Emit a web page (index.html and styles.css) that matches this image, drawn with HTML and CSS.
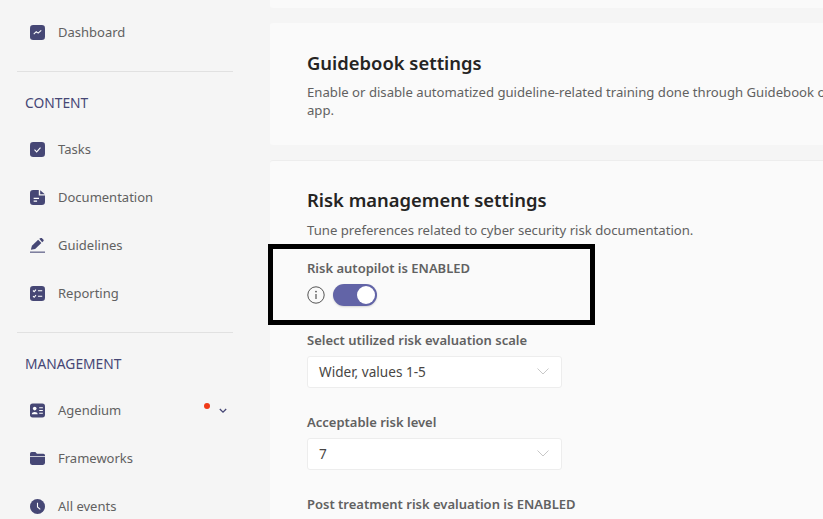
FILE: index.html
```html
<!DOCTYPE html>
<html lang="en">
<head>
    <meta charset="UTF-8">
    <meta name="viewport" content="width=device-width, initial-scale=1.0">
    <title>Risk management settings</title>
    <link rel="stylesheet" href="styles.css">
</head>
<body>
    <nav class="sidebar">
        <a class="nav-item">
            <svg class="nav-icon" viewBox="0 0 14 14"><rect width="14" height="14" rx="3" fill="#464775"/><path d="M3.5 8.5 L5.8 6.2 L7.6 7.6 L10.5 5" fill="none" stroke="#fff" stroke-width="1"/></svg>
            Dashboard
        </a>
        <div class="divider"></div>
        <div class="section-label">CONTENT</div>
        <a class="nav-item">
            <svg class="nav-icon" viewBox="0 0 14 14"><rect width="14" height="14" rx="3" fill="#464775"/><path d="M4.2 7.2 L6.2 9.2 L9.8 5.2" fill="none" stroke="#fff" stroke-width="1"/></svg>
            Tasks
        </a>
        <a class="nav-item">
            <svg class="nav-icon" viewBox="0 0 14 14"><path d="M3 0 H8.2 V5.2 H14 V11 A3 3 0 0 1 11 14 H3 A3 3 0 0 1 0 11 V3 A3 3 0 0 1 3 0 Z" fill="#464775"/><path d="M9.5 0.2 L13.8 3.9 H9.5 Z" fill="#464775"/><path d="M3.4 7.8 H8.4 M3.4 10.4 H6.6" stroke="#fff" stroke-width="1"/></svg>
            Documentation
        </a>
        <a class="nav-item">
            <svg class="nav-icon" viewBox="0 0 14 14"><path d="M0.8 11 L1.8 7.2 L7.6 1.6 L10.6 4.6 L4.8 10.2 Z" fill="#464775"/><path d="M8.6 0.8 L10 0 A1 1 0 0 1 11 0 L12.6 1.6 A1 1 0 0 1 12.6 2.8 L11.4 3.9 Z" fill="#464775"/><path d="M0 13.2 H14" stroke="#464775" stroke-width="1"/></svg>
            Guidelines
        </a>
        <a class="nav-item">
            <svg class="nav-icon" viewBox="0 0 14 14"><rect width="14" height="14" rx="3" fill="#464775"/><path d="M7.4 4.4 H11.4 M7.4 9.6 H11.4 M2.8 4.2 L3.9 5.3 L5.6 3.4 M2.8 9.4 L3.9 10.5 L5.6 8.6" fill="none" stroke="#fff" stroke-width="1"/></svg>
            Reporting
        </a>
        <div class="divider"></div>
        <div class="section-label">MANAGEMENT</div>
        <a class="nav-item">
            <svg class="nav-icon" viewBox="0 0 14 14"><rect y="0.5" width="14" height="13" rx="2.5" fill="#464775"/><circle cx="4.4" cy="5.2" r="1.7" fill="#fff"/><path d="M1.6 10.4 C1.8 7.6 7 7.6 7.2 10.4 Z" fill="#fff"/><path d="M8.6 4.4 H12 M8.6 7 H12 M8.6 9.6 H12" stroke="#fff" stroke-width="1"/></svg>
            Agendium
            <span class="red-dot"></span>
            <svg class="nav-chevron" viewBox="0 0 8 6"><path d="M0.8 1 L4 4.2 L7.2 1" fill="none" stroke="#464775" stroke-width="1.3"/></svg>
        </a>
        <a class="nav-item">
            <svg class="nav-icon" viewBox="0 0 14 14"><path d="M0 2.5 A1.5 1.5 0 0 1 1.5 1 H5 L6.5 2.5 H12.5 A1.5 1.5 0 0 1 14 4 V4.6 H0 Z" fill="#464775"/><path d="M0 5.4 H14 V11 A2 2 0 0 1 12 13 H2 A2 2 0 0 1 0 11 Z" fill="#464775"/></svg>
            Frameworks
        </a>
        <a class="nav-item">
            <svg class="nav-icon" viewBox="0 0 14 14"><circle cx="7" cy="7" r="7" fill="#464775"/><path d="M7 3.4 V7.4 L9.6 9.6" fill="none" stroke="#fff" stroke-width="1"/></svg>
            All events
        </a>
    </nav>

    <main class="content">
        <div class="card card-stub"></div>

        <section class="card">
            <h2>Guidebook settings</h2>
            <p class="card-desc">Enable or disable automatized guideline-related training done through Guidebook on mobile and desktop app.</p>
        </section>

        <section class="card card-risk">
            <h2>Risk management settings</h2>
            <p class="card-desc">Tune preferences related to cyber security risk documentation.</p>

            <div class="field">
                <label>Risk autopilot is ENABLED</label>
                <div class="toggle-row">
                    <svg class="info-icon" viewBox="0 0 18 18"><circle cx="9" cy="9" r="8.2" fill="none" stroke="#555" stroke-width="1"/><circle cx="9" cy="5.6" r="0.9" fill="#555"/><path d="M9 8 V13" stroke="#555" stroke-width="1.2"/></svg>
                    <span class="toggle"><span class="toggle-knob"></span></span>
                </div>
            </div>

            <div class="field field-next">
                <label>Select utilized risk evaluation scale</label>
                <div class="select">
                    Wider, values 1-5
                    <svg class="select-arrow" viewBox="0 0 12 7"><path d="M0.5 0.5 L6 6 L11.5 0.5" fill="none" stroke="#c8c8c8" stroke-width="1"/></svg>
                </div>
            </div>

            <div class="field field-next">
                <label>Acceptable risk level</label>
                <div class="select">
                    7
                    <svg class="select-arrow" viewBox="0 0 12 7"><path d="M0.5 0.5 L6 6 L11.5 0.5" fill="none" stroke="#c8c8c8" stroke-width="1"/></svg>
                </div>
            </div>

            <div class="field field-next">
                <label>Post treatment risk evaluation is ENABLED</label>
            </div>
        </section>
    </main>

    <div class="highlight-box"></div>
</body>
</html>
```

FILE: styles.css
```css
body {
    font-family: "Noto Sans", Arial, sans-serif;
    margin: 0;
    padding: 0;
    height: 100vh;
    overflow: hidden;
    display: flex;
    background-color: #f5f5f5;
    color: #616161;
    font-size: 13px;
}

.sidebar {
    width: 270px;
    flex: none;
    padding-top: 8px;
    box-sizing: border-box;
}

.nav-item {
    position: relative;
    display: flex;
    align-items: center;
    height: 48px;
    padding-left: 30px;
    color: #616161;
}

.nav-icon {
    width: 15px;
    height: 15px;
    margin-right: 13px;
}

.nav-chevron {
    position: absolute;
    left: 219px;
    top: 22px;
    width: 8px;
    height: 6px;
}

.red-dot {
    position: absolute;
    left: 204px;
    top: 17px;
    width: 6px;
    height: 6px;
    border-radius: 50%;
    background-color: #f03a17;
}

.divider {
    height: 1px;
    margin: 15px 37px 0 17px;
    background-color: #e1e1e1;
}

.section-label {
    height: 20px;
    line-height: 20px;
    margin: 21px 0 12px 25px;
    color: #464775;
    font-size: 13.8px;
}

.content {
    flex: 1;
    min-width: 0;
    overflow: hidden;
}

.card {
    width: 739px;
    box-sizing: border-box;
    margin-bottom: 15px;
    padding: 25px 37px 0;
    height: 122px;
    background-color: #fafafa;
    border-radius: 3px;
}

.card-stub {
    height: 8px;
    padding: 0;
    border-radius: 0 0 3px 3px;
}

.card-risk {
    height: auto;
    padding-bottom: 40px;
    border-top: 1px solid #ededed;
}

.card-risk h2 {
    margin-top: -1px;
    margin-bottom: 7px;
}

h2 {
    margin: 0 0 6px;
    font-size: 18.4px;
    line-height: 29px;
    font-weight: 600;
    color: #252423;
}

.card-desc {
    margin: 0;
    font-size: 13.15px;
    line-height: 18px;
    color: #616161;
}

.field {
    margin-top: 20px;
}

.field-next {
    margin-top: 25px;
}

.field label {
    display: block;
    line-height: 18px;
    font-weight: 600;
    color: #616161;
}

.toggle-row {
    display: flex;
    align-items: center;
    margin-top: 7px;
}

.info-icon {
    width: 18px;
    height: 18px;
    margin-right: 8px;
}

.toggle {
    display: flex;
    justify-content: flex-end;
    align-items: center;
    width: 44px;
    height: 22px;
    box-sizing: border-box;
    padding-right: 2px;
    border-radius: 11px;
    background-color: #6264a7;
    box-shadow: 0 1px 2px rgba(0, 0, 0, 0.15);
}

.toggle-knob {
    width: 18px;
    height: 18px;
    border-radius: 50%;
    background-color: #fff;
}

.select {
    position: relative;
    display: flex;
    align-items: center;
    box-sizing: border-box;
    width: 255px;
    height: 32px;
    margin-top: 7px;
    padding: 0 0 2px 11px;
    background-color: #fff;
    border: 1px solid #ededed;
    border-radius: 3px;
    color: #484644;
    font-size: 13.6px;
}

.select-arrow {
    position: absolute;
    right: 12px;
    top: 11px;
    width: 12px;
    height: 7px;
}

.highlight-box {
    position: absolute;
    left: 268px;
    top: 244px;
    width: 317px;
    height: 71px;
    border: 5px solid #000;
}
```
